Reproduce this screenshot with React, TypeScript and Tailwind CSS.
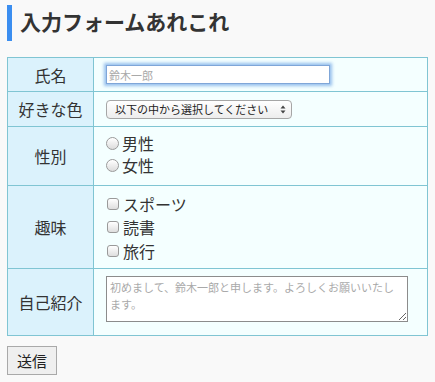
import React from "react";

function Radio({ label }: { label: string }) {
  return (
    <label className="flex items-center h-[22px] gap-[3px]">
      <input
        type="radio"
        name="gender"
        className="appearance-none w-[13px] h-[13px] rounded-full border border-[#9a9a9a] bg-[linear-gradient(#ffffff,#dcdcdc)] shadow-[inset_0_1px_1px_rgba(255,255,255,0.8)] m-0"
      />
      <span className="text-[16px] leading-[22px]">{label}</span>
    </label>
  );
}

function Check({ label }: { label: string }) {
  return (
    <label className="flex items-center h-[23.5px] gap-[4px] pl-[1px]">
      <input
        type="checkbox"
        className="appearance-none w-[12px] h-[12px] rounded-[3px] border border-[#9a9a9a] bg-[linear-gradient(#ffffff,#dedede)] m-0"
      />
      <span className="text-[16px] leading-[22px]">{label}</span>
    </label>
  );
}

export default function App() {
  const labelCell =
    "border-r border-b border-[#80c5d3] bg-[#dbf2fc] flex items-center justify-center text-[16px] leading-[22px]";
  const valueCell =
    "border-r border-b border-[#80c5d3] bg-[#f4ffff] flex items-center pl-[12px]";
  return (
    <div className="min-h-[382px] w-[435px] bg-[#f9f9f9] text-[#333333] font-['Noto_Sans_CJK_JP',sans-serif]">
      <div className="pt-[5px] px-[7px]">
        <h1 className="border-l-[5px] border-[#3b8ef0] h-[36px] pl-[8px] pb-[3px] flex items-center text-[21px] font-bold leading-none">
          入力フォームあれこれ
        </h1>
        <div className="mt-[16px] w-[421px] grid grid-cols-[86px_334px] border-t border-l border-[#80c5d3]">
          <div className={`${labelCell} h-[34px]`}>氏名</div>
          <div className={`${valueCell} h-[34px]`}>
            <input
              autoFocus
              type="text"
              placeholder="鈴木一郎"
              className="w-[224px] h-[19px] border border-[#7fa6d8] bg-white px-[2px] text-[11px] leading-[17px] outline-none shadow-[0_0_3px_2px_rgba(90,150,225,0.6)] placeholder:text-[#a9a9a9]"
            />
          </div>
          <div className={`${labelCell} h-[35px]`}>好きな色</div>
          <div className={`${valueCell} h-[35px]`}>
            <div className="relative w-[186px] h-[19px] flex">
              <select className="appearance-none block w-[186px] h-[19px] rounded-[4px] border border-[#a6a6a6] bg-[linear-gradient(#ffffff,#ededed)] pl-[8px] py-0 text-[11px] leading-[17px] text-[#222] outline-none">
                <option>以下の中から選択してください</option>
                <option>赤</option>
                <option>青</option>
                <option>緑</option>
              </select>
              <svg
                className="absolute right-[6px] top-[5px] block pointer-events-none"
                width="6"
                height="9"
                viewBox="0 0 6 9"
              >
                <path d="M0.5 3.5 L3 0.5 L5.5 3.5 Z" fill="#444" />
                <path d="M0.5 5.5 L3 8.5 L5.5 5.5 Z" fill="#444" />
              </svg>
            </div>
          </div>
          <div className={`${labelCell} h-[59px]`}>性別</div>
          <div className={`${valueCell} h-[59px] pb-[4px]`}>
            <div className="flex flex-col">
              <Radio label="男性" />
              <Radio label="女性" />
            </div>
          </div>
          <div className={`${labelCell} h-[83px]`}>趣味</div>
          <div className={`${valueCell} h-[83px]`}>
            <div className="flex flex-col">
              <Check label="スポーツ" />
              <Check label="読書" />
              <Check label="旅行" />
            </div>
          </div>
          <div className={`${labelCell} h-[67px]`}>自己紹介</div>
          <div className={`${valueCell} h-[67px] !items-start pt-[7px]`}>
            <textarea
              placeholder="初めまして、鈴木一郎と申します。よろしくお願いいたします。"
              className="w-[302px] h-[46px] border border-[#8c8c8c] bg-white px-[3px] py-[2px] text-[11px] leading-[17px] outline-none placeholder:text-[#a9a9a9]"
            />
          </div>
        </div>
        <button className="mt-[10px] w-[50px] h-[29px] border border-[#a9a9a9] bg-[#efefef] text-[15px] leading-none text-[#222]">
          送信
        </button>
      </div>
    </div>
  );
}
